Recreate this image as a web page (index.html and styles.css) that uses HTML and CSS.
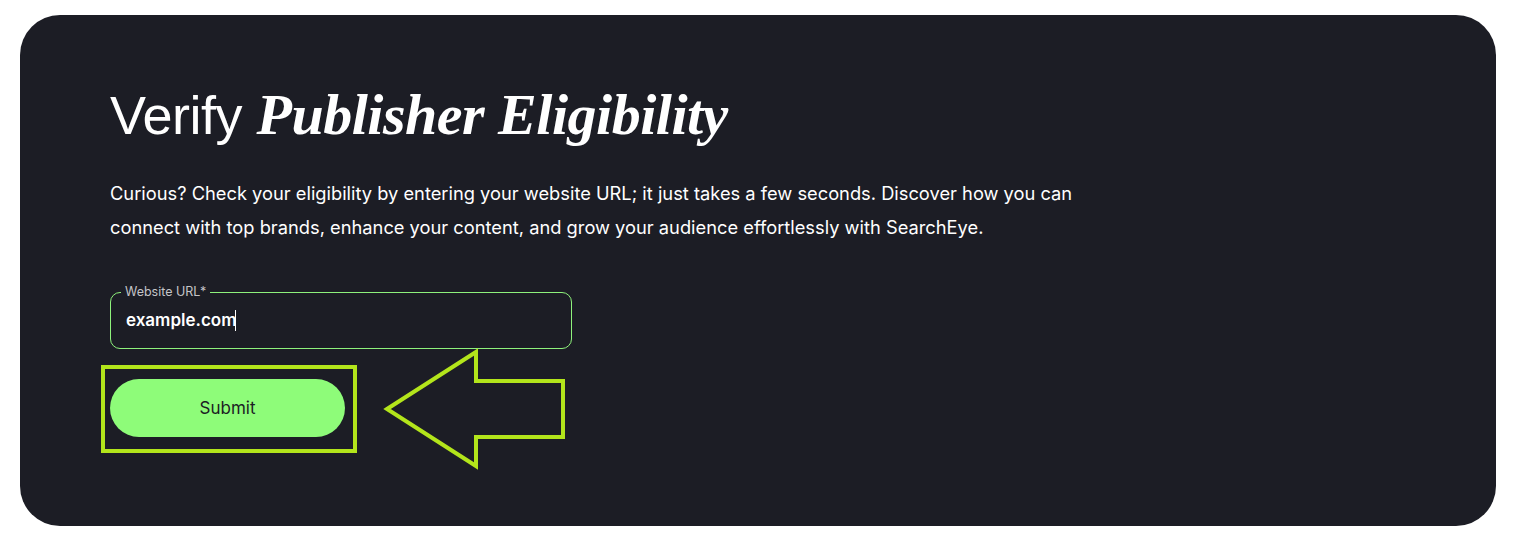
FILE: index.html
```html
<!DOCTYPE html>
<html lang="en">
<head>
<meta charset="UTF-8">
<title>Verify Publisher Eligibility</title>
<link rel="stylesheet" href="styles.css">
</head>
<body>
<section class="card">
    <h1 class="title">Verify <em>Publisher Eligibility</em></h1>
    <p class="intro">Curious? Check your eligibility by entering your website URL; it just takes a few seconds. Discover how you can connect with top brands, enhance your content, and grow your audience effortlessly with SearchEye.</p>

    <form class="check-form" onsubmit="return false">
        <fieldset class="url-field">
            <legend>Website URL*</legend>
            <input type="text" value="example.com" class="url-input"><span class="caret"></span>
        </fieldset>
        <button type="submit" class="submit-btn">Submit</button>
    </form>

    <!-- annotation: box round the button + arrow -->
    <svg class="annot" width="1513" height="547" viewBox="0 0 1513 547">
        <rect x="103" y="367" width="252" height="84" fill="none" stroke="#b3e51b" stroke-width="4"/>
        <polygon points="387,409 476,352 476,381 563,381 563,437 476,437 476,466" fill="none" stroke="#b3e51b" stroke-width="4" stroke-linejoin="miter"/>
    </svg>
</section>
</body>
</html>
```

FILE: styles.css
```css
html, body {
    margin: 0;
    background: #fff;
}
body {
    padding: 15px 17px 21px 20px;
    font-family: Inter, "Liberation Sans", sans-serif;
}
.card {
    background: #1c1d25;
    border-radius: 40px;
    height: 511px;
    box-sizing: border-box;
    padding: 67px 90px 0 90px;
    color: #fff;
}
.title {
    margin: 0;
    font-family: "Liberation Sans", sans-serif;
    font-weight: 300;
    font-size: 54px;
    line-height: 66px;
    letter-spacing: -0.5px;
}
.title em {
    font-family: "Liberation Serif", serif;
    font-weight: 700;
    font-style: italic;
    font-size: 58px;
}
.intro {
    margin: 28px 0 0 0;
    max-width: 980px;
    font-size: 18.3px;
    line-height: 34px;
}
.check-form {
    margin-top: 42px;
}
.url-field {
    margin: 0;
    width: 462px;
    height: 63px;
    box-sizing: border-box;
    padding: 0 15px;
    border: 1px solid #8ef27c;
    border-radius: 10px;
    display: flex;
    align-items: center;
}
.url-field legend {
    font-size: 12.5px;
    color: #c4c4c8;
    padding: 0 4px;
    margin-left: -5px;
    line-height: 12px;
}
.url-input {
    width: 109px;
    flex: none;
    background: transparent;
    border: none;
    outline: none;
    padding: 0;
    margin-top: -6px;
    color: #fff;
    font-family: Inter, "Liberation Sans", sans-serif;
    font-size: 17px;
    font-weight: 600;
}
.caret {
    width: 1px;
    height: 21px;
    margin-top: -6px;
    background: #fff;
}
.submit-btn {
    display: block;
    margin-top: 30px;
    width: 235px;
    height: 58px;
    border: none;
    border-radius: 29px;
    background: #8efc79;
    color: #1c1d24;
    font-family: Inter, "Liberation Sans", sans-serif;
    font-size: 17px;
}
.annot {
    position: absolute;
    left: 0;
    top: 0;
    pointer-events: none;
}
```
